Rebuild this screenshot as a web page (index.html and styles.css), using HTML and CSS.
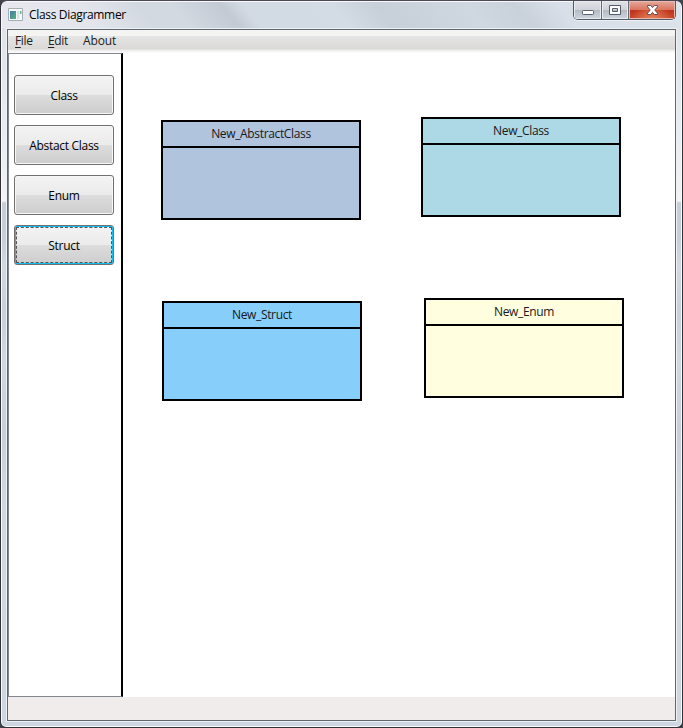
FILE: index.html
```html
<!DOCTYPE html>
<html lang="en">
<head>
<meta charset="utf-8">
<title>Class Diagrammer</title>
<link rel="stylesheet" href="styles.css">
</head>
<body>
<div class="window">
  <header class="titlebar">
    <svg class="app-icon" width="16" height="16" viewBox="0 0 16 16">
      <defs><linearGradient id="g" x1="0" y1="0" x2="1" y2="1"><stop offset="0" stop-color="#477bb0"/><stop offset="1" stop-color="#51b67b"/></linearGradient></defs>
      <path d="M.5 2.500h14v12H.5z" fill="#fafafa" stroke="#a5adb4"/>
      <path d="M2 5h6v8H2z" fill="url(#g)"/>
      <path d="M9 5h2.500v8H9z" fill="#dce3e5"/>
      <path d="M12 5h1.500v3H12z" fill="#65b98c"/>
    </svg>
    <h1 class="title">Class Diagrammer</h1>
    <div class="controls">
      <span class="control"><svg width="27" height="18" viewBox="0 0 27 18"><rect x="8.5" y="9.5" width="11" height="4" rx=".8" fill="#fff" stroke="#5b606e"/></svg></span>
      <span class="control"><svg width="26" height="18" viewBox="0 0 26 18"><path fill-rule="evenodd" d="M7.500 4.500h11v9h-11zM10.500 7.500v3h5v-3z" fill="#fff" stroke="#565b69"/></svg></span>
      <span class="control close"><svg width="46" height="18" viewBox="0 0 46 18"><path d="M18.500 4.500h3.200l1.800 2.100 1.800-2.100h3.200v1.300L25.800 9l2.700 3.200v1.300h-3.200l-1.800-2.100-1.800 2.100h-3.200v-1.300L21.200 9l-2.700-3.200z" fill="#fff" stroke="#604b58"/></svg></span>
    </div>
  </header>
  <main class="client">
    <nav class="menu">
      <span class="file"><u>F</u>ile</span><span class="edit"><u>E</u>dit</span><span class="about">About</span>
    </nav>
    <div class="workspace">
      <aside class="tools">
        <button>Class</button>
        <button>Abstact Class</button>
        <button>Enum</button>
        <button class="focused">Struct</button>
      </aside>
      <section class="canvas">
        <article class="node abstract"><h2>New_AbstractClass</h2></article>
        <article class="node class"><h2>New_Class</h2></article>
        <article class="node struct"><h2>New_Struct</h2></article>
        <article class="node enum"><h2>New_Enum</h2></article>
      </section>
    </div>
    <footer class="status"></footer>
  </main>
</div>
</body>
</html>
```
FILE: styles.css
```css
* { box-sizing: border-box; }
body {
  margin: 0;
  background: #41444b;
  font: 12px/16px "Open Sans", "Noto Sans", sans-serif;
  letter-spacing: -0.35px;
  color: #000;
}
h1, h2 { margin: 0; font: inherit; }
.window {
  width: 683px;
  height: 728px;
  display: flex;
  flex-direction: column;
  padding: 0 5px 5px;
  border: 1px solid #303238;
  border-top-color: #4a4954;
  border-radius: 7px 7px 6px 6px;
  box-shadow: inset 0 0 0 1px #f8fafc;
  background: linear-gradient(180deg, #dce1e9 0, #eceef2 160px, #f4f3f5 200px, #c6ced8 202px, #c6ced8 235px, #d2d9e3 265px, #c8d0d9 310px, #d0d8e2 360px, #c8cfda 430px, #d0d8e2 500px, #cdd6e1 100%);
}
.titlebar {
  height: 26px;
  margin: 1px -4px 0;
  padding-left: 6px;
  display: flex;
  flex: none;
  border-radius: 5px 5px 0 0;
  background: linear-gradient(50deg, #e6e8ee 0, #e2e5eb 14%, #d3d9e1 22%, #d2d9e1 27%, #c3cad4 34%, #d2dae4 37%, #d3dbe5 50%, #c7cfd9 56%, #cfd7e1 69%, #c9d1db 76%, #d8dfe8 82%, #dde3eb 100%);
}
.app-icon { margin: 4px 5px 0 0; }
.title { padding-top: 5px; letter-spacing: -0.33px; }
.controls {
  height: 19px;
  margin: -1px 5px 0 auto;
  display: flex;
  border: 1px solid #545966;
  border-top: 0;
  border-radius: 0 0 5px 5px;
  overflow: hidden;
  box-shadow: 0 1px 0 #edf1f5;
}
.control {
  height: 18px;
  background: linear-gradient(#dfe2e7 0, #cfd3d9 50%, #b4bac4 51%, #cfd5dd 100%);
  box-shadow: inset 0 0 0 1px #e8ebef;
}
.control + .control { border-left: 1px solid #666b77; }
.control svg { display: block; }
.close {
  background: radial-gradient(ellipse at 50% 110%, #e7875c 0, rgba(214, 76, 42, 0) 65%), linear-gradient(#e6a99c 0, #d8735f 49%, #bf321c 51%, #c9472b 100%);
  box-shadow: inset 0 0 0 1px #ebb9ad;
}
.client {
  flex: 1;
  min-height: 0;
  display: flex;
  flex-direction: column;
  margin: 1px;
  border: 1px solid #5f666e;
  box-shadow: 0 0 0 1px #edf3f5;
  background: #fff;
}
.menu {
  height: 23px;
  flex: none;
  padding: 3px 7px 0;
  display: flex;
  color: #222;
  background: linear-gradient(#f4f5f3 0, #f4f5f3 6px, #e6e5e6 6px, #dad9d6 19px, #ecebec 20px, #fff 23px);
}
.menu u { text-underline-offset: 2px; text-decoration-thickness: 1px; }
.file { width: 33px; }
.edit { width: 35px; }
.about { letter-spacing: -0.15px; }
.workspace { flex: 1; display: flex; min-height: 0; }
.tools {
  width: 115px;
  display: flex;
  flex-direction: column;
  gap: 10px;
  padding: 21px 7px 0 5px;
  border: 1px solid #828790;
  border-right: 2px solid #000;
}
.tools button {
  height: 40px;
  width: 100px;
  flex: none;
  padding: 2px 0 0;
  border: 1px solid #707070;
  border-radius: 3px;
  font: inherit;
  letter-spacing: -0.3px;
  color: #000;
  background: linear-gradient(#f3f3f3 0, #ebebeb 50%, #dddddd 50%, #cdcdcd 100%);
  box-shadow: inset 0 0 0 1px #f7f7f7;
}
.tools .focused {
  position: relative;
  box-shadow: inset 0 0 0 1px #13bff0;
}
.focused::after {
  content: "";
  position: absolute;
  inset: 1px;
  border: 1px dashed #555;
}
.canvas { position: relative; flex: 1; }
.node {
  position: absolute;
  width: 200px;
  height: 100px;
  border: 2px solid #000;
}
.node h2 {
  height: 26px;
  padding-top: 4px;
  border-bottom: 2px solid #000;
  text-align: center;
  color: #181818;
}
.abstract { left: 38px; top: 67px; background: #b0c4de; }
.class { left: 298px; top: 64px; background: #add8e6; }
.struct { left: 39px; top: 248px; background: #87cefa; }
.enum { left: 301px; top: 245px; background: #ffffe0; }
.status { height: 23px; flex: none; background: #f0eceb; }
```
